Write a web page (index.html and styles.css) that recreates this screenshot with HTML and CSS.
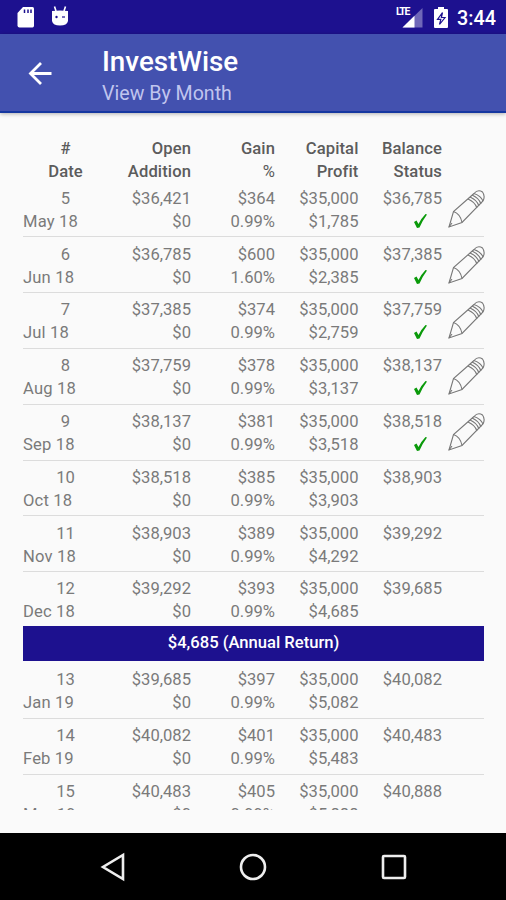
FILE: index.html
```html
<!DOCTYPE html>
<html lang="en">
<head>
    <meta charset="UTF-8">
    <meta name="viewport" content="width=device-width, initial-scale=1.0">
    <title>InvestWise</title>
    <link rel="stylesheet" href="styles.css">
</head>
<body>

    <!-- Status bar -->
    <div class="status-bar">
        <div class="status-left">
            <svg width="18" height="22" viewBox="0 0 18 22">
                <path d="M6 1H15.500Q17 1 17 2.500V19.500Q17 21.500 15.500 21.500H2.500Q0.500 21.500 0.500 19.500V7Z" fill="#fff"/>
                <path d="M7.500 3.500V7M11 3.500V7M14 3.500V7" stroke="#1d118f" stroke-width="1.500"/>
            </svg>
            <svg width="18" height="21" viewBox="0 0 18 21">
                <path d="M3.500 0.500L5 5M14.500 0.500L13 5" stroke="#fff" stroke-width="1.600"/>
                <path d="M1 5Q9 4 17 5V15Q16 19.500 9 19.500Q2 19.500 1 15Z" fill="#fff"/>
                <circle cx="5.500" cy="11" r="1.200" fill="#1d118f"/>
                <path d="M11 11H14" stroke="#1d118f" stroke-width="1.200"/>
            </svg>
        </div>
        <div class="status-right">
            <span class="signal">
                <span class="lte">LTE</span>
                <svg width="21" height="20" viewBox="0 0 21 20">
                    <path d="M0.500 19.500L20.500 0V19.500Z" fill="#6f67b8"/>
                    <path d="M0.500 19.500L12.500 7.800V19.500Z" fill="#fff"/>
                </svg>
            </span>
            <svg class="battery" width="14" height="21" viewBox="0 0 14 21">
                <path d="M4 0H10V2H13Q14 2 14 3V20Q14 21 13 21H1Q0 21 0 20V3Q0 2 1 2H4Z" fill="#fff"/>
                <path d="M8.500 5.500L3.500 12.300H6.800L5.500 17.500L11 10.500H7.400Z" fill="#fff" stroke="#1d118f" stroke-width="1.200"/>
            </svg>
            <span class="clock">3:44</span>
        </div>
    </div>

    <!-- App bar -->
    <div class="app-bar">
        <svg width="24" height="24" viewBox="0 0 24 24" fill="none" stroke="#fff" stroke-width="2.800">
            <path d="M23.500 12.500H3M13 2L2.500 12.500L13 23"/>
        </svg>
        <div class="titles">
            <h1>InvestWise</h1>
            <div class="subtitle">View By Month</div>
        </div>
    </div>

    <div class="content">
        <div class="row header">
            <div class="num">#<br>Date</div>
            <div>Open<br>Addition</div>
            <div>Gain<br><span class="pct">%</span></div>
            <div>Capital<br>Profit</div>
            <div>Balance<br>Status</div>
        </div>
        <div id="months"></div>
    </div>

    <!-- Navigation bar -->
    <div class="nav-bar">
        <svg width="28" height="30" viewBox="0 0 28 30"><path d="M24 3V27L4 15Z"/></svg>
        <svg width="30" height="30" viewBox="0 0 30 30"><circle cx="15" cy="15" r="12"/></svg>
        <svg width="30" height="30" viewBox="0 0 30 30"><rect x="4" y="4" width="22" height="22" rx="1"/></svg>
    </div>

    <script>
        const months = [
            { n: 5, date: "May 18", open: "$36,421", gain: "$364", pct: "0.99%", profit: "$1,785", balance: "$36,785", done: true },
            { n: 6, date: "Jun 18", open: "$36,785", gain: "$600", pct: "1.60%", profit: "$2,385", balance: "$37,385", done: true },
            { n: 7, date: "Jul 18", open: "$37,385", gain: "$374", pct: "0.99%", profit: "$2,759", balance: "$37,759", done: true },
            { n: 8, date: "Aug 18", open: "$37,759", gain: "$378", pct: "0.99%", profit: "$3,137", balance: "$38,137", done: true },
            { n: 9, date: "Sep 18", open: "$38,137", gain: "$381", pct: "0.99%", profit: "$3,518", balance: "$38,518", done: true },
            { n: 10, date: "Oct 18", open: "$38,518", gain: "$385", pct: "0.99%", profit: "$3,903", balance: "$38,903" },
            { n: 11, date: "Nov 18", open: "$38,903", gain: "$389", pct: "0.99%", profit: "$4,292", balance: "$39,292" },
            { n: 12, date: "Dec 18", open: "$39,292", gain: "$393", pct: "0.99%", profit: "$4,685", balance: "$39,685", annual: "$4,685" },
            { n: 13, date: "Jan 19", open: "$39,685", gain: "$397", pct: "0.99%", profit: "$5,082", balance: "$40,082" },
            { n: 14, date: "Feb 19", open: "$40,082", gain: "$401", pct: "0.99%", profit: "$5,483", balance: "$40,483" },
            { n: 15, date: "Mar 19", open: "$40,483", gain: "$405", pct: "0.99%", profit: "$5,888", balance: "$40,888" }
        ];

        const check = `<svg class="check" width="15" height="16" viewBox="0 0 15 16">
            <path d="M1 9L3.500 7.500L5.500 11Q8.500 5 12.500 1L14 1.500Q9.500 7.500 6.500 14.500L4 15Z" fill="#0a9a0a"/></svg>`;

        const pencil = `<svg class="pencil" width="38" height="40" viewBox="0 0 38 40" fill="none" stroke="#777" stroke-width="1.100">
            <path d="M1 38L5.500 22.500L26 4.500Q30 0 34.500 3Q37.500 7 35 12L14 33.500Z"/>
            <path d="M5.500 22.500Q12.500 25 14 33.500M1 38L4 34M22 8Q29 11 31 17M24 6Q31 9 33 15M26 4.500Q33 7 35 12M20 10Q27 13 29 19"/></svg>`;

        document.getElementById("months").innerHTML = months.map(m => `
            <div class="row ${m.annual ? "last" : ""}">
                <div><div class="num">${m.n}</div><div class="date">${m.date}</div></div>
                <div>${m.open}<br>$0</div>
                <div>${m.gain}<br>${m.pct}</div>
                <div>$35,000<br>${m.profit}</div>
                <div>${m.balance}${m.done ? check : ""}</div>
                <div>${m.done ? pencil : ""}</div>
            </div>
            ${m.annual ? `<div class="annual">${m.annual} (Annual Return)</div>` : ""}`).join("");
    </script>

</body>
</html>
```

FILE: styles.css
```css
* {
    box-sizing: border-box;
}

body {
    margin: 0;
    width: 506px;
    height: 900px;
    overflow: hidden;
    display: flex;
    flex-direction: column;
    background: #fafafa;
    font-family: Roboto, sans-serif;
    color: #7a7a7a;
}

svg {
    display: block;
}

/* Status bar */
.status-bar {
    height: 34px;
    flex: none;
    display: flex;
    justify-content: space-between;
    padding: 6px 10px 0 17px;
    background: #1d118f;
    color: #fff;
}

.status-left {
    display: flex;
    gap: 16px;
}

.status-right {
    display: flex;
    align-items: flex-start;
}

.signal {
    display: flex;
    position: relative;
    padding-top: 2px;
}

.lte {
    position: absolute;
    left: -6px;
    top: 1px;
    font-size: 10.5px;
    line-height: 10px;
    font-weight: bold;
    letter-spacing: -1.3px;
}

.battery {
    margin: 1px 9px 0 11px;
}

.clock {
    font-size: 19.8px;
    line-height: 25px;
    font-weight: 500;
}

/* App bar */
.app-bar {
    height: 79px;
    flex: none;
    display: flex;
    align-items: center;
    gap: 50px;
    padding-left: 28px;
    background: #4351af;
    border-bottom: 2px solid #1537a0;
    box-shadow: 0 1px 4px rgba(0, 0, 0, 0.3);
}

.titles {
    padding-top: 9px;
}

h1 {
    margin: 0;
    font-size: 27.8px;
    line-height: 32px;
    font-weight: 500;
    color: #fff;
}

.subtitle {
    font-size: 19.6px;
    line-height: 31px;
    color: #c0c5ee;
}

/* Month table */
.content {
    height: 697px;
    flex: none;
    overflow: hidden;
    padding: 23.5px 22px 0 23px;
}

.row {
    height: 55.8px;
    display: grid;
    grid-template-columns: 85px 83px 84px 83.5px 83.5px 42px;
    padding-top: 5.2px;
    border-bottom: 1px solid #dcdcdc;
    font-size: 16.6px;
    line-height: 23px;
    text-align: right;
}

.row.header {
    height: 45.2px;
    padding-top: 0;
    border-bottom: none;
    font-weight: 500;
    letter-spacing: 0.1px;
    color: #5c5c5c;
}

.row.last {
    height: 54px;
    border-bottom: none;
}

.num {
    text-align: center;
}

.date {
    text-align: left;
    letter-spacing: 0.15px;
}

.pct {
    font-weight: normal;
}

.check {
    margin: 3px 14px 0 auto;
}

.pencil {
    margin: 2px 0 0 6px;
}

/* Annual total */
.annual {
    height: 35px;
    margin-bottom: 2px;
    background: #1d118f;
    color: #fff;
    font-size: 16.6px;
    line-height: 34px;
    font-weight: 500;
    text-align: center;
}

/* Navigation bar */
.nav-bar {
    height: 67px;
    flex: none;
    margin-top: auto;
    display: flex;
    align-items: center;
    justify-content: space-between;
    padding: 0 97px 0 99px;
    background: #000;
}

.nav-bar svg {
    fill: none;
    stroke: #eee;
    stroke-width: 2.6;
}
```
